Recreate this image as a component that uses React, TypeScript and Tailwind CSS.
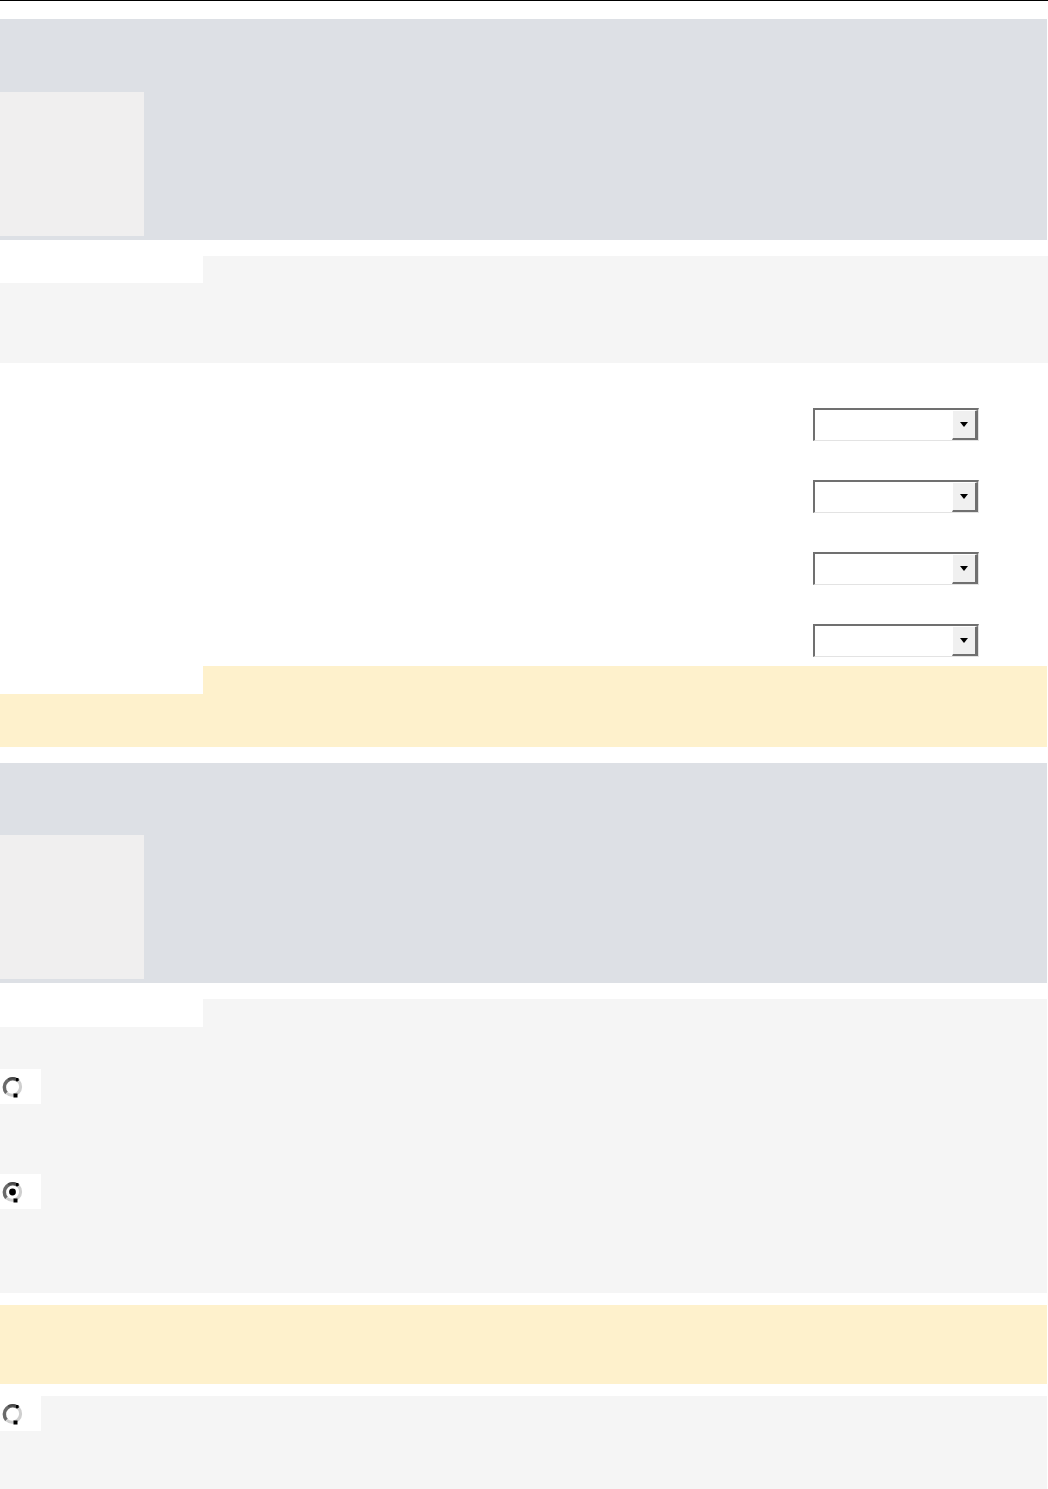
import React from 'react';

function Banner({ top }: { top: string }) {
  return (
    <div className={`w-[1047px] bg-[#dde0e5] ${top} pb-[4px]`}>
      <div className="h-[144px] w-[144px] bg-[#f0efef]" />
    </div>
  );
}

function Select() {
  return (
    <div className="flex h-[33px] w-[166px] justify-end border-t-2 border-l-2 border-r border-b border-t-[#707070] border-l-[#707070] border-r-[#e3e3e3] border-b-[#e3e3e3] bg-white">
      <div className="flex h-full w-[26px] items-center justify-center border-t border-l border-t-white border-l-white border-r-[3px] border-b-2 border-r-[#707070] border-b-[#707070] bg-[#f0f0f0]">
        <svg width="8" height="5" viewBox="0 0 8 5">
          <path d="M0 0h8L4 5z" fill="#000" />
        </svg>
      </div>
    </div>
  );
}

function Radio({ checked = false }: { checked?: boolean }) {
  return (
    <div className="flex h-[35px] w-[41px] items-center bg-white pl-[2px]">
      <svg className="block shrink-0" width="21" height="22" viewBox="0 0 21 22">
        <circle cx="10.5" cy="11" r="8.5" fill="#fff" />
        <path d="M16.5 5A8.5 8.5 0 0 0 4.5 17" fill="none" stroke="#6a6a6a" strokeWidth="3.5" />
        <path d="M16.5 5A8.5 8.5 0 0 1 4.5 17" fill="none" stroke="#cfcfcf" strokeWidth="3" />
        <path d="M6.2 3.6A8.5 8.5 0 0 1 14.5 3.2" fill="none" stroke="#4a4a4a" strokeWidth="2.4" />
        <rect x="14" y="2" width="2.5" height="3" fill="#000" />
        <rect x="11.5" y="17.5" width="4" height="4" fill="#000" />
        {checked && <circle cx="10.5" cy="11" r="3.4" fill="#000" />}
      </svg>
    </div>
  );
}

export default function App() {
  return (
    <div className="w-[1048px] min-h-[1489px] bg-white font-['Liberation_Sans',sans-serif]">
      <div className="h-px w-full bg-black" />
      <div className="h-[18px]" />

      <Banner top="pt-[73px]" />
      <div className="h-[16px]" />

      {/* first detail panel */}
      <div className="h-[107px] w-[1048px] bg-[#f5f5f5]">
        <div className="h-[27px] w-[203px] bg-white" />
      </div>

      {/* selects */}
      <div className="flex flex-col gap-[39px] pt-[45px] pb-[9px] pl-[813px]">
        <Select />
        <Select />
        <Select />
        <Select />
      </div>

      <div className="h-[81px] w-[1047px] bg-[#fef1cc]">
        <div className="h-[28px] w-[203px] bg-white" />
      </div>
      <div className="h-[16px]" />

      <Banner top="pt-[72px]" />
      <div className="h-[16px]" />

      {/* radio panel */}
      <div className="h-[294px] w-[1047px] bg-[#f5f5f5]">
        <div className="h-[28px] w-[203px] bg-white" />
        <div className="pt-[42px]">
          <Radio />
        </div>
        <div className="pt-[70px]">
          <Radio checked />
        </div>
      </div>
      <div className="h-[12px]" />

      <div className="h-[79px] w-[1047px] bg-[#fef1cc]" />
      <div className="h-[12px]" />

      <div className="h-[93px] w-[1047px] bg-[#f5f5f5]">
        <Radio />
      </div>
    </div>
  );
}
